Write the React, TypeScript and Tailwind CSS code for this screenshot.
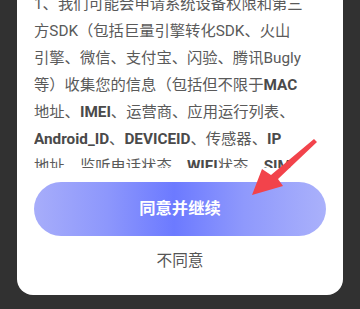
import React from 'react';

const lines: React.ReactNode[] = [
  <>1、我们可能会申请系统设备权限和第三</>,
  <>方SDK（包括巨量引擎转化SDK、火山</>,
  <>引擎、微信、支付宝、闪验、腾讯Bugly</>,
  <>
    等）收集您的信息（包括但不限于<b className="font-bold text-[#4a4a4a]">MAC</b>
  </>,
  <>
    地址、<b className="font-bold text-[#4a4a4a]">IMEI</b>、运营商、应用运行列表、
  </>,
  <>
    <b className="font-bold text-[#4a4a4a]">Android_ID</b>、<b className="font-bold text-[#4a4a4a]">DEVICEID</b>、传感器、<b className="font-bold text-[#4a4a4a]">IP</b>
  </>,
  <>
    地址、监听电话状态、<b className="font-bold text-[#4a4a4a]">WIFI</b>状态、<b className="font-bold text-[#4a4a4a]">SIM</b>
  </>,
];

const Arrow = () => (
  <svg className="pointer-events-none absolute left-0 top-0" width="360" height="309" viewBox="0 0 360 309">
    <polygon points="317,142 278,179 283,186 252,195 262,169 271,175 314,139" fill="#f2434b" />
  </svg>
);

export default function App() {
  return (
    <div
      className="relative h-[309px] w-[360px] overflow-hidden bg-[#313131]"
      style={{ fontFamily: "Roboto, 'Noto Sans CJK SC', sans-serif" }}
    >
      <div className="mx-[17px] flex h-[295px] flex-col rounded-b-[16px] bg-white px-[17px]">
        {/* scrolled policy text */}
        <div className="h-[168px] overflow-hidden">
          <div className="mt-[-9.5px] text-[15.3px] leading-[27px] text-[#5a5a5a]">
            {lines.map((line, i) => (
              <div key={i} className="whitespace-nowrap">
                {line}
              </div>
            ))}
          </div>
        </div>

        <button className="mt-[14px] flex h-[54px] w-full items-center justify-center rounded-full bg-[linear-gradient(90deg,#a7adfa_0%,#8d97fc_25%,#6c7aff_48%,#8f99fc_72%,#aab1fb_100%)] text-[16.3px] font-bold text-white">
          同意并继续
        </button>

        <div className="mt-[13px] text-center text-[15.7px] leading-[24px] text-[#555555]">不同意</div>
      </div>
      <Arrow />
    </div>
  );
}
